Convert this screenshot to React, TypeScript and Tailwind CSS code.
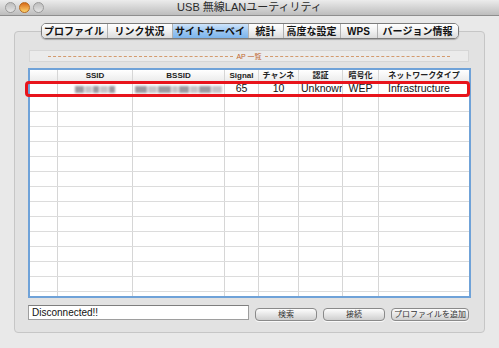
const FONT = "font-['Liberation_Sans','Noto_Sans_CJK_JP',sans-serif]";

const tabs = [
  { label: "プロファイル", w: "w-[66px]" },
  { label: "リンク状況", w: "w-[65px]" },
  { label: "サイトサーベイ", w: "w-[76px]", active: true },
  { label: "統計", w: "w-[35px]" },
  { label: "高度な設定", w: "w-[57px]" },
  { label: "WPS", w: "w-[37px]" },
  { label: "バージョン情報", w: "w-[80px]" },
];

const cols = [
  { label: "", w: "w-[28px]" },
  { label: "SSID", w: "w-[75px]" },
  { label: "BSSID", w: "w-[92px]" },
  { label: "Signal", w: "w-[34px]" },
  { label: "チャンネ", w: "w-[40px]" },
  { label: "認証", w: "w-[44px]" },
  { label: "暗号化", w: "w-[36px]" },
  { label: "ネットワークタイプ", w: "flex-1" },
];

function Blur({ widths }: { widths: number[] }) {
  return (
    <div className="flex items-center gap-[1px] blur-[1px]">
      {widths.map((w, i) => (
        <span
          key={i}
          className={i % 2 ? "h-[7px] bg-[#c4c4c8]" : "h-[7px] bg-[#9a9aa0]"}
          style={{ width: w }}
        />
      ))}
    </div>
  );
}

function Cell({ w, children, last }: { w: string; children?: React.ReactNode; last?: boolean }) {
  return (
    <div
      className={`${w} shrink-0 h-full flex items-center justify-center overflow-hidden whitespace-nowrap ${
        last ? "" : "border-r border-[#d6d6d6]"
      }`}
    >
      {children}
    </div>
  );
}

function Button({ label, w }: { label: string; w: string }) {
  return (
    <div
      className={`${w} h-[13px] rounded-[4px] border border-[#8a8a8a] bg-gradient-to-b from-[#fdfdfd] via-[#e6e6e6] to-[#cfcfcf] flex items-center justify-center text-[8px] text-[#333] shadow-[0_1px_0_rgba(255,255,255,0.8)]`}
    >
      {label}
    </div>
  );
}

export default function App() {
  const emptyRows = Array.from({ length: 14 });
  return (
    <div className={`w-[499px] h-[348px] bg-[#e9e9e9] flex flex-col ${FONT}`}>
      {/* title bar */}
      <div className="h-[16px] shrink-0 relative flex items-center justify-center bg-gradient-to-b from-[#ececec] to-[#bdbdbd] border-b border-[#8e8e8e]">
        <div className="absolute left-[5px] top-[2px] flex gap-[3px]">
          <span className="w-[11px] h-[11px] rounded-full bg-gradient-to-b from-[#bdbdbd] to-[#e4e4e4] border border-[#9a9a9a]" />
          <span className="w-[11px] h-[11px] rounded-full bg-gradient-to-b from-[#d76a12] to-[#fbd36a] border border-[#b86a20]" />
          <span className="w-[11px] h-[11px] rounded-full bg-gradient-to-b from-[#bdbdbd] to-[#e4e4e4] border border-[#9a9a9a]" />
        </div>
        <span className="text-[11px] text-[#2a2a2a] leading-none">USB 無線LANユーティリティ</span>
      </div>

      <div className="px-[14px] pt-[7px] flex flex-col">
        {/* tabs */}
        <div className="flex justify-center relative z-10">
          <div className="flex h-[16px] rounded-[5px] border border-[#7c7c7c] overflow-hidden shadow-[0_1px_1px_rgba(0,0,0,0.25)]">
            {tabs.map((t, i) => (
              <div
                key={t.label}
                className={`${t.w} h-full flex items-center justify-center text-[10px] font-bold text-[#111] whitespace-nowrap ${
                  i < tabs.length - 1 ? "border-r border-[#b0b0b0]" : ""
                } ${
                  t.active
                    ? "bg-gradient-to-b from-[#cfe4fa] via-[#9cc7f2] to-[#7cb4ec]"
                    : "bg-gradient-to-b from-[#ffffff] via-[#f1f1f1] to-[#dcdcdc]"
                }`}
              >
                {t.label}
              </div>
            ))}
          </div>
        </div>

        {/* group box */}
        <div className="-mt-[8px] h-[302px] rounded-[4px] border border-[#c6c6c6] bg-[#e2e2e2] pt-[18px] pl-[13px] pr-[13px] flex flex-col">
          <div className="ml-[1px] w-[440px] h-[12px] border border-[#d6d6d6] bg-[#ebebeb] flex items-center px-[18px] gap-[3px]">
            <div className="flex-1 border-t border-dashed border-[#d39a6e]" />
            <span className="text-[7px] text-[#c0662c] leading-none">AP 一覧</span>
            <div className="flex-1 border-t border-dashed border-[#d39a6e]" />
          </div>

          {/* table */}
          <div className="mt-[6px] w-[443px] h-[230px] border-2 border-[#6fa2d8] bg-white relative overflow-hidden">
            <div className="flex h-[12px] border-b border-[#c9c9c9] bg-gradient-to-b from-[#ffffff] to-[#ececec] text-[8px] font-bold text-[#222]">
              {cols.map((c, i) => (
                <Cell key={i} w={c.w} last={i === cols.length - 1}>
                  {c.label}
                </Cell>
              ))}
            </div>
            <div className="flex h-[15px] border-b border-[#dcdcdc] text-[10.5px] text-[#111]">
              <Cell w="w-[28px]" />
              <Cell w="w-[75px]">
                <Blur widths={[9, 7, 6, 8, 6]} />
              </Cell>
              <Cell w="w-[92px]">
                <Blur widths={[12, 9, 13, 6, 10, 8, 12, 10]} />
              </Cell>
              <Cell w="w-[34px]">65</Cell>
              <Cell w="w-[40px]">10</Cell>
              <Cell w="w-[44px]">
                <span className="w-full pl-[2px] text-left overflow-hidden">Unknown</span>
              </Cell>
              <Cell w="w-[36px]">WEP</Cell>
              <Cell w="flex-1" last>
                <span className="w-full pl-[9px] text-left">Infrastructure</span>
              </Cell>
            </div>
            {emptyRows.map((_, r) => (
              <div key={r} className="flex h-[15px] border-b border-[#dcdcdc]">
                {cols.map((c, i) => (
                  <Cell key={i} w={c.w} last={i === cols.length - 1} />
                ))}
              </div>
            ))}
          </div>

          {/* status + buttons */}
          <div className="mt-[7px] flex items-start">
            <div className="w-[221px] h-[15px] bg-white border border-[#9e9e9e] border-t-[#7e7e7e] flex items-center pl-[3px] text-[10px] text-[#111]">
              Disconnected!!
            </div>
            <div className="ml-[6px] mt-[3px] flex gap-[6px]">
              <Button label="検索" w="w-[62px]" />
              <Button label="接続" w="w-[62px]" />
              <Button label="プロファイルを追加" w="w-[78px]" />
            </div>
          </div>
        </div>
      </div>

      {/* red highlight */}
      <div className="absolute left-[25px] top-[81px] w-[445px] h-[16px] rounded-[4px] border-[3px] border-[#e8141c] pointer-events-none" />
    </div>
  );
}
